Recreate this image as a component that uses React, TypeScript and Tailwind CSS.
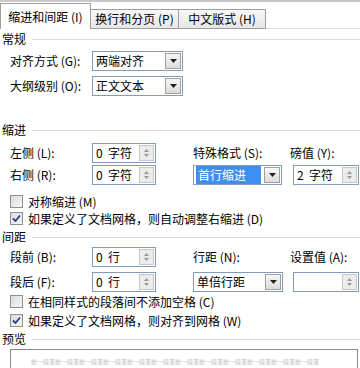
import React from "react";

const font = { fontFamily: '"Noto Sans CJK SC", "Noto Sans", sans-serif' };

function Arrow() {
  return (
    <svg width="7" height="4" viewBox="0 0 7 4">
      <path d="M0 0h7L3.5 4z" fill="#222" />
    </svg>
  );
}

function Select({ value, active, w }: { value: string; active?: boolean; w: string }) {
  return (
    <div className={`flex h-[20px] items-stretch border border-[#7f9db9] bg-white ${w}`}>
      <div className="flex flex-1 items-center px-[2px]">
        <span
          className={
            active
              ? "flex h-full flex-1 items-center bg-[#3d8ef0] px-[2px] text-white"
              : "px-[1px]"
          }
        >
          {value}
        </span>
      </div>
      <div className="m-[1px] flex w-[16px] items-center justify-center border border-[#a0a0a0] bg-gradient-to-b from-[#f7f7f7] to-[#dcdcdc]">
        <Arrow />
      </div>
    </div>
  );
}

function Spin({ value, w }: { value: string; w: string }) {
  return (
    <div className={`flex h-[20px] items-stretch border border-[#7f9db9] bg-white ${w}`}>
      <div className="flex flex-1 items-center whitespace-pre px-[3px]">{value}</div>
      <div className="m-[1px] flex w-[15px] flex-col items-center justify-center gap-[2px] border border-[#c8c8c8] bg-[#ececec]">
        <svg width="5" height="3" viewBox="0 0 5 3">
          <path d="M0 3L2.5 0L5 3z" fill="#9a9a9a" />
        </svg>
        <svg width="5" height="3" viewBox="0 0 5 3">
          <path d="M0 0h5L2.5 3z" fill="#9a9a9a" />
        </svg>
      </div>
    </div>
  );
}

function Check({ checked, label, h }: { checked?: boolean; label: string; h: string }) {
  return (
    <div className={`flex items-center gap-[5px] pl-[10px] ${h}`}>
      <div className="flex h-[13px] w-[13px] items-center justify-center border border-[#8f8f8f] bg-gradient-to-br from-[#dcdcdc] to-[#f6f6f6]">
        {checked && (
          <svg width="9" height="9" viewBox="0 0 9 9">
            <path d="M1 4.5L3.5 7L8 1.5" stroke="#21417a" strokeWidth="1.8" fill="none" />
          </svg>
        )}
      </div>
      <span>{label}</span>
    </div>
  );
}

function Header({ title, h = "h-[20px]" }: { title: string; h?: string }) {
  return (
    <div className={`flex items-center gap-[6px] pl-[2px] ${h}`}>
      <span>{title}</span>
      <div className="h-px flex-1 bg-[#dcdcdc]" />
    </div>
  );
}

export default function App() {
  return (
    <div className="h-[368px] w-[360px] overflow-hidden bg-white text-[12px] leading-none text-black" style={font}>
      {/* tab strip */}
      <div className="flex h-[29px] items-end border-t-[2px] border-[#c8c8c8] bg-white">
        <div className="flex h-[26px] w-[91px] items-center justify-center border border-b-0 border-[#9aa0a0] bg-white">
          缩进和间距 (I)
        </div>
        <div className="flex h-[20px] w-[88px] items-center justify-center border border-l-0 border-[#9aa0a0] bg-gradient-to-b from-[#f8f8f8] to-[#e6e6e6]">
          换行和分页 (P)
        </div>
        <div className="flex h-[20px] w-[87px] items-center justify-center border border-l-0 border-[#9aa0a0] bg-gradient-to-b from-[#f8f8f8] to-[#e6e6e6]">
          中文版式 (H)
        </div>
        <div className="h-px flex-1 bg-[#e0e0e0]" />
      </div>

      <div>
        <Header title="常规" />
        <div className="flex h-[24px] items-center pl-[10px]">
          <span className="w-[82px]">对齐方式 (G):</span>
          <Select value="两端对齐" w="w-[91px]" />
        </div>
        <div className="mt-[3px] flex h-[20px] items-center pl-[10px]">
          <span className="w-[82px]">大纲级别 (O):</span>
          <Select value="正文文本" w="w-[91px]" />
        </div>

        <div className="h-[24px]" />
        <Header title="缩进" />
        <div className="mt-[2px] flex h-[21px] items-center pl-[10px]">
          <span className="w-[82px]">左侧 (L):</span>
          <Spin value="0  字符" w="w-[64px]" />
          <span className="ml-[37px] w-[97px]">特殊格式 (S):</span>
          <span>磅值 (Y):</span>
        </div>
        <div className="mt-[1px] flex h-[21px] items-center pl-[10px]">
          <span className="w-[82px]">右侧 (R):</span>
          <Spin value="0  字符" w="w-[64px]" />
          <div className="ml-[37px]">
            <Select value="首行缩进" active w="w-[89px]" />
          </div>
          <div className="ml-[11px]">
            <Spin value="2  字符" w="w-[66px]" />
          </div>
        </div>
        <div className="mt-[8px]">
          <Check h="h-[17px]" label="对称缩进 (M)" />
          <Check h="h-[17px]" checked label="如果定义了文档网格，则自动调整右缩进 (D)" />
        </div>

        <Header title="间距" />
        <div className="flex h-[20px] items-center pl-[10px]">
          <span className="w-[82px]">段前 (B):</span>
          <Spin value="0  行" w="w-[64px]" />
          <span className="ml-[37px] w-[97px]">行距 (N):</span>
          <span>设置值 (A):</span>
        </div>
        <div className="mt-[5px] flex h-[20px] items-center pl-[10px]">
          <span className="w-[82px]">段后 (F):</span>
          <Spin value="0  行" w="w-[64px]" />
          <div className="ml-[37px]">
            <Select value="单倍行距" w="w-[90px]" />
          </div>
          <div className="ml-[10px]">
            <Spin value="" w="w-[66px]" />
          </div>
        </div>
        <div>
          <Check h="h-[19px]" label="在相同样式的段落间不添加空格 (C)" />
          <Check h="h-[19px]" checked label="如果定义了文档网格，则对齐到网格 (W)" />
        </div>

        <Header title="预览" h="h-[18px]" />
        <div className="ml-[10px] mr-[2px] mt-[1px] h-[30px] overflow-hidden border border-[#8a8a8a] bg-white px-[20px] pt-[9px]">
          <div className="whitespace-nowrap text-[6px] text-[#c0c0c0]">
            前一段落前一段落前一段落前一段落前一段落前一段落前一段落前一段落前一段落前一段落前一段落前一段落
          </div>
        </div>
      </div>
    </div>
  );
}
